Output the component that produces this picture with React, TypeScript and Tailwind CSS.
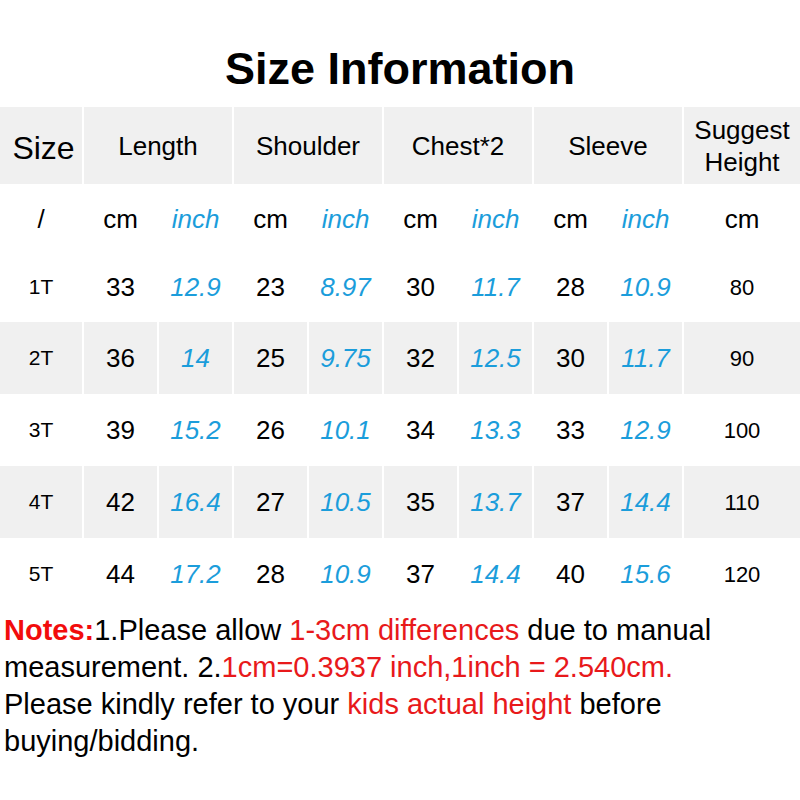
const cols = 'grid grid-cols-[82px_73px_73px_73px_73px_73px_73px_73px_73px_1fr] gap-x-[2px]';

const rows = [
  ['1T', '33', '12.9', '23', '8.97', '30', '11.7', '28', '10.9', '80'],
  ['2T', '36', '14', '25', '9.75', '32', '12.5', '30', '11.7', '90'],
  ['3T', '39', '15.2', '26', '10.1', '34', '13.3', '33', '12.9', '100'],
  ['4T', '42', '16.4', '27', '10.5', '35', '13.7', '37', '14.4', '110'],
  ['5T', '44', '17.2', '28', '10.9', '37', '14.4', '40', '15.6', '120'],
];

const heights = ['h-[70px]', 'h-[72px]', 'h-[72px]', 'h-[72px]', 'h-[72px]'];

export default function App() {
  return (
    <div className="w-[800px] h-[800px] bg-white text-black font-['Liberation_Sans',Arial,sans-serif]">
      {/* Title */}
      <div className="h-[107px] pt-[46px] text-center text-[45px] leading-none font-bold">Size Information</div>

      {/* Header */}
      <div className={`${cols} h-[77px] text-[26px] leading-[32px]`}>
        <div className="bg-[#f0f0f0] flex items-center justify-center pt-[4px] pl-[5px] text-[32px]">Size</div>
        <div className="col-span-2 bg-[#f0f0f0] flex items-center justify-center">Length</div>
        <div className="col-span-2 bg-[#f0f0f0] flex items-center justify-center">Shoulder</div>
        <div className="col-span-2 bg-[#f0f0f0] flex items-center justify-center">Chest*2</div>
        <div className="col-span-2 bg-[#f0f0f0] flex items-center justify-center">Sleeve</div>
        <div className="bg-[#f0f0f0] flex items-center justify-center text-center">
          Suggest
          <br />
          Height
        </div>
      </div>

      {/* Units */}
      <div className={`${cols} h-[68px] pt-[3px] text-[26px]`}>
        <div className="flex items-center justify-center">/</div>
        {[0, 1, 2, 3].map(i => (
          <div key={i} className="contents">
            <div className="flex items-center justify-center">cm</div>
            <div className="flex items-center justify-center italic text-[#1b9ddb]">inch</div>
          </div>
        ))}
        <div className="flex items-center justify-center">cm</div>
      </div>

      {/* Data rows */}
      {rows.map((r, ri) => {
        const bg = ri % 2 === 1 ? 'bg-[#f0f0f0]' : 'bg-white';
        return (
          <div key={r[0]} className={`${cols} ${heights[ri]} text-[26px]`}>
            {r.map((v, ci) => (
              <div
                key={ci}
                className={`${bg} flex items-center justify-center ${
                  ci === 0 ? 'text-[21px]' : ci === 9 ? 'text-[22px]' : ci % 2 === 0 ? 'italic text-[#1b9ddb]' : ''
                }`}
              >
                {v}
              </div>
            ))}
          </div>
        );
      })}

      {/* Notes */}
      <div className="mt-[2px] pl-[4px] text-[29px] leading-[37px] whitespace-nowrap">
        <div>
          <span className="font-bold text-[#f20c0c]">Notes:</span>1.Please allow{' '}
          <span className="text-[#e8191b]">1-3cm differences</span> due to manual
        </div>
        <div>
          measurement. 2.<span className="text-[#e8191b]">1cm=0.3937 inch,1inch = 2.540cm.</span>
        </div>
        <div>
          Please kindly refer to your <span className="text-[#e8191b]">kids actual height</span> before
        </div>
        <div>buying/bidding.</div>
      </div>
    </div>
  );
}
